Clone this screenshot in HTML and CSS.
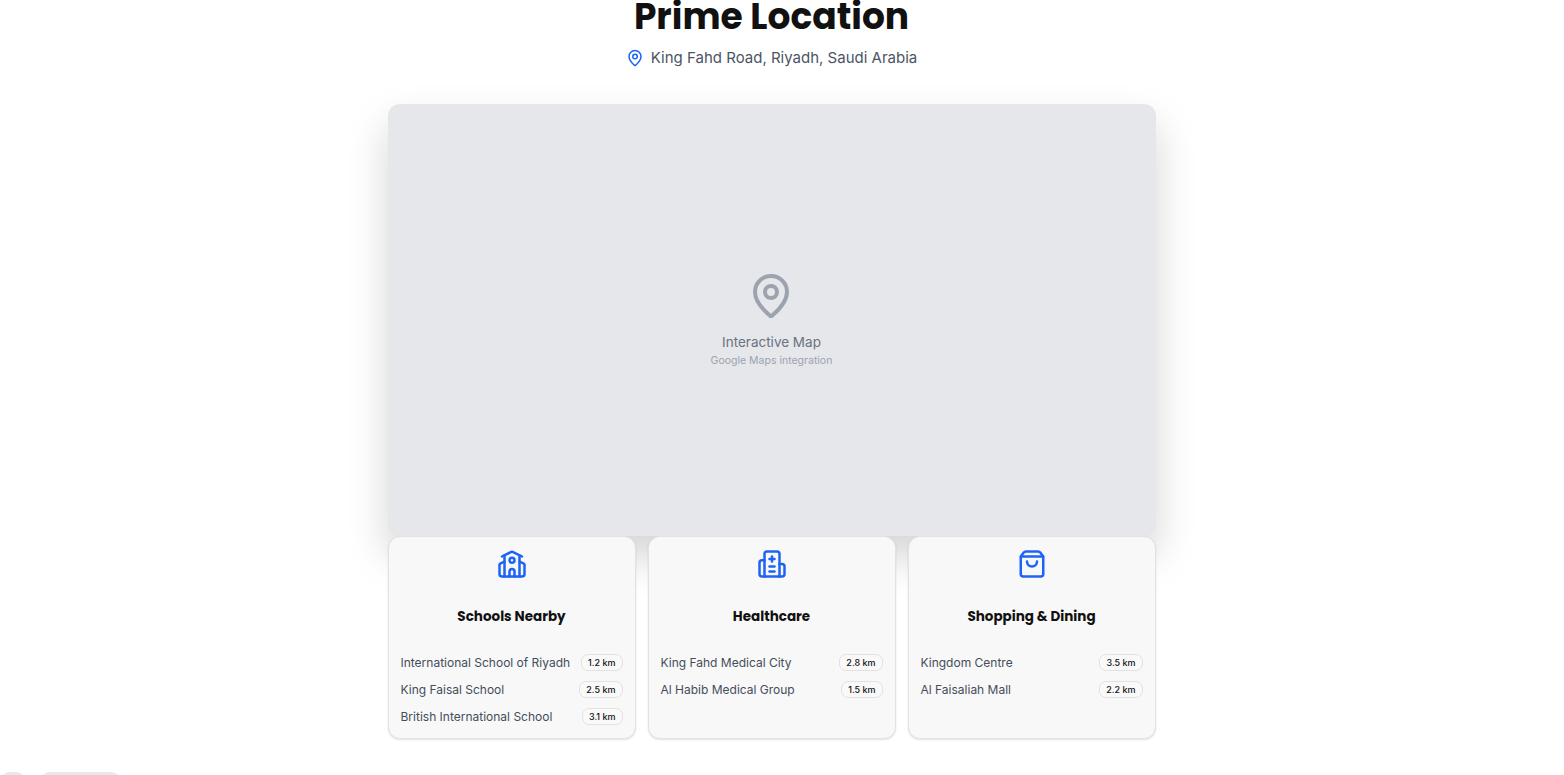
FILE: index.html
```html
<!DOCTYPE html>
<html lang="en">
<head>
<meta charset="utf-8">
<title>Prime Location</title>
<link rel="stylesheet" href="styles.css">
</head>
<body>
<main class="page">
  <header class="head">
    <h1 class="title">Prime Location</h1>
    <p class="address">
      <svg class="pin-small" viewBox="0 0 24 24"><path d="M20 10c0 4.993-5.539 10.193-7.399 11.799a1 1 0 0 1-1.202 0C9.539 20.193 4 14.993 4 10a8 8 0 0 1 16 0"/><circle cx="12" cy="10" r="3"/></svg>
      <span>King Fahd Road, Riyadh, Saudi Arabia</span>
    </p>
  </header>
  <section class="content">
    <div class="map">
      <svg class="pin-big" viewBox="0 0 24 24"><path d="M20 10c0 4.993-5.539 10.193-7.399 11.799a1 1 0 0 1-1.202 0C9.539 20.193 4 14.993 4 10a8 8 0 0 1 16 0"/><circle cx="12" cy="10" r="3"/></svg>
      <p class="map-title">Interactive Map</p>
      <p class="map-sub">Google Maps integration</p>
    </div>
    <div class="cards">
      <article class="card">
        <svg class="card-icon" viewBox="0 0 24 24"><path d="M14 22v-4a2 2 0 1 0-4 0v4"/><path d="m18 10 3.447 1.724a1 1 0 0 1 .553.894V20a2 2 0 0 1-2 2H4a2 2 0 0 1-2-2v-7.382a1 1 0 0 1 .553-.894L6 10"/><path d="M18 5v17"/><path d="m4 6 7.106-3.553a2 2 0 0 1 1.788 0L20 6"/><path d="M6 5v17"/><circle cx="12" cy="9" r="2"/></svg>
        <h3 class="card-title">Schools Nearby</h3>
        <ul class="list">
          <li class="row"><span>International School of Riyadh</span><b class="badge">1.2 km</b></li>
          <li class="row"><span>King Faisal School</span><b class="badge">2.5 km</b></li>
          <li class="row"><span>British International School</span><b class="badge">3.1 km</b></li>
        </ul>
      </article>
      <article class="card">
        <svg class="card-icon" viewBox="0 0 24 24"><path d="M12 6v4"/><path d="M14 14h-4"/><path d="M14 18h-4"/><path d="M14 8h-4"/><path d="M18 12h2a2 2 0 0 1 2 2v6a2 2 0 0 1-2 2H4a2 2 0 0 1-2-2v-9a2 2 0 0 1 2-2h2"/><path d="M18 22V4a2 2 0 0 0-2-2H8a2 2 0 0 0-2 2v18"/></svg>
        <h3 class="card-title">Healthcare</h3>
        <ul class="list">
          <li class="row"><span>King Fahd Medical City</span><b class="badge">2.8 km</b></li>
          <li class="row"><span>Al Habib Medical Group</span><b class="badge">1.5 km</b></li>
        </ul>
      </article>
      <article class="card">
        <svg class="card-icon" viewBox="0 0 24 24"><path d="M16 10a4 4 0 0 1-8 0"/><path d="M3.103 6.034h17.794"/><path d="M3.4 5.467a2 2 0 0 0-.4 1.2V20a2 2 0 0 0 2 2h14a2 2 0 0 0 2-2V6.667a2 2 0 0 0-.4-1.2l-2-2.667A2 2 0 0 0 17 2H7a2 2 0 0 0-1.6.8z"/></svg>
        <h3 class="card-title">Shopping &amp; Dining</h3>
        <ul class="list">
          <li class="row"><span>Kingdom Centre</span><b class="badge">3.5 km</b></li>
          <li class="row"><span>Al Faisaliah Mall</span><b class="badge">2.2 km</b></li>
        </ul>
      </article>
    </div>
  </section>
  <div class="next-tabs">
    <span class="stub stub-a"></span>
    <span class="stub stub-b"></span>
  </div>
</main>
</body>
</html>
```
FILE: styles.css
```css
* { box-sizing: border-box; }
html, body { margin: 0; height: 100%; overflow: hidden; background: #fff; }
body { font-family: Inter, "Liberation Sans", sans-serif; }
.page { width: 1543px; }
.head { display: flex; flex-direction: column; align-items: center; margin-top: -7px; }
.title {
  margin: 0;
  font-family: Poppins, Inter, sans-serif;
  font-size: 36px;
  line-height: 48px;
  font-weight: 700;
  color: #111111;
}
.address {
  display: flex;
  align-items: center;
  gap: 7px;
  margin: 5px 0 0;
  font-size: 15px;
  line-height: 24px;
  color: #4b5563;
}
.pin-small, .pin-big, .card-icon { fill: none; stroke-linecap: round; stroke-linejoin: round; stroke-width: 2; }
.pin-small { width: 18px; height: 18px; stroke: #1d63f5; }
.content { width: 768px; margin: 34px auto 0; }
.map {
  height: 432px;
  border-radius: 12px;
  background: #e5e7eb;
  box-shadow: 0 20px 40px rgba(0, 0, 0, .17);
  display: flex;
  flex-direction: column;
  align-items: center;
  justify-content: center;
}
.pin-big { width: 48px; height: 48px; stroke: #9ca3af; margin-right: 1px; }
.map-title { margin: 12px 0 0; font-size: 13.5px; line-height: 20px; color: #6b7280; }
.map-sub { margin: 1px 0 0; font-size: 10.5px; line-height: 16px; color: #9ca3af; }
.cards { display: grid; grid-template-columns: repeat(3, 1fr); gap: 12px; position: relative; }
.card {
  height: 203px;
  padding: 12px;
  background: #f8f8f8;
  border: 1px solid #e2e2e2;
  border-radius: 12px;
  box-shadow: 0 1px 2px rgba(0, 0, 0, .12);
  display: flex;
  flex-direction: column;
  align-items: center;
}
.card-icon { width: 30px; height: 30px; stroke: #1d63f5; flex: none; }
.card-title {
  margin: 27px 0 0;
  font-family: Poppins, Inter, sans-serif;
  font-size: 13.5px;
  line-height: 22px;
  font-weight: 700;
  color: #111111;
}
.list { list-style: none; margin: 26px 0 0; padding: 0; width: 100%; display: flex; flex-direction: column; gap: 10px; }
.row { display: flex; justify-content: space-between; align-items: center; height: 17px; font-size: 12px; color: #444d5b; }
.badge {
  padding: 0 6px;
  line-height: 15px;
  font-size: 9px;
  font-weight: 500;
  color: #111111;
  background: #f9f9f9;
  border: 1px solid #e2e2e2;
  border-radius: 7px;
}
.next-tabs { display: flex; gap: 14px; margin-top: 33px; }
.stub { height: 20px; background: #e5e7eb; border-radius: 12px; }
.stub-a { width: 26px; }
.stub-b { width: 81px; }
```
